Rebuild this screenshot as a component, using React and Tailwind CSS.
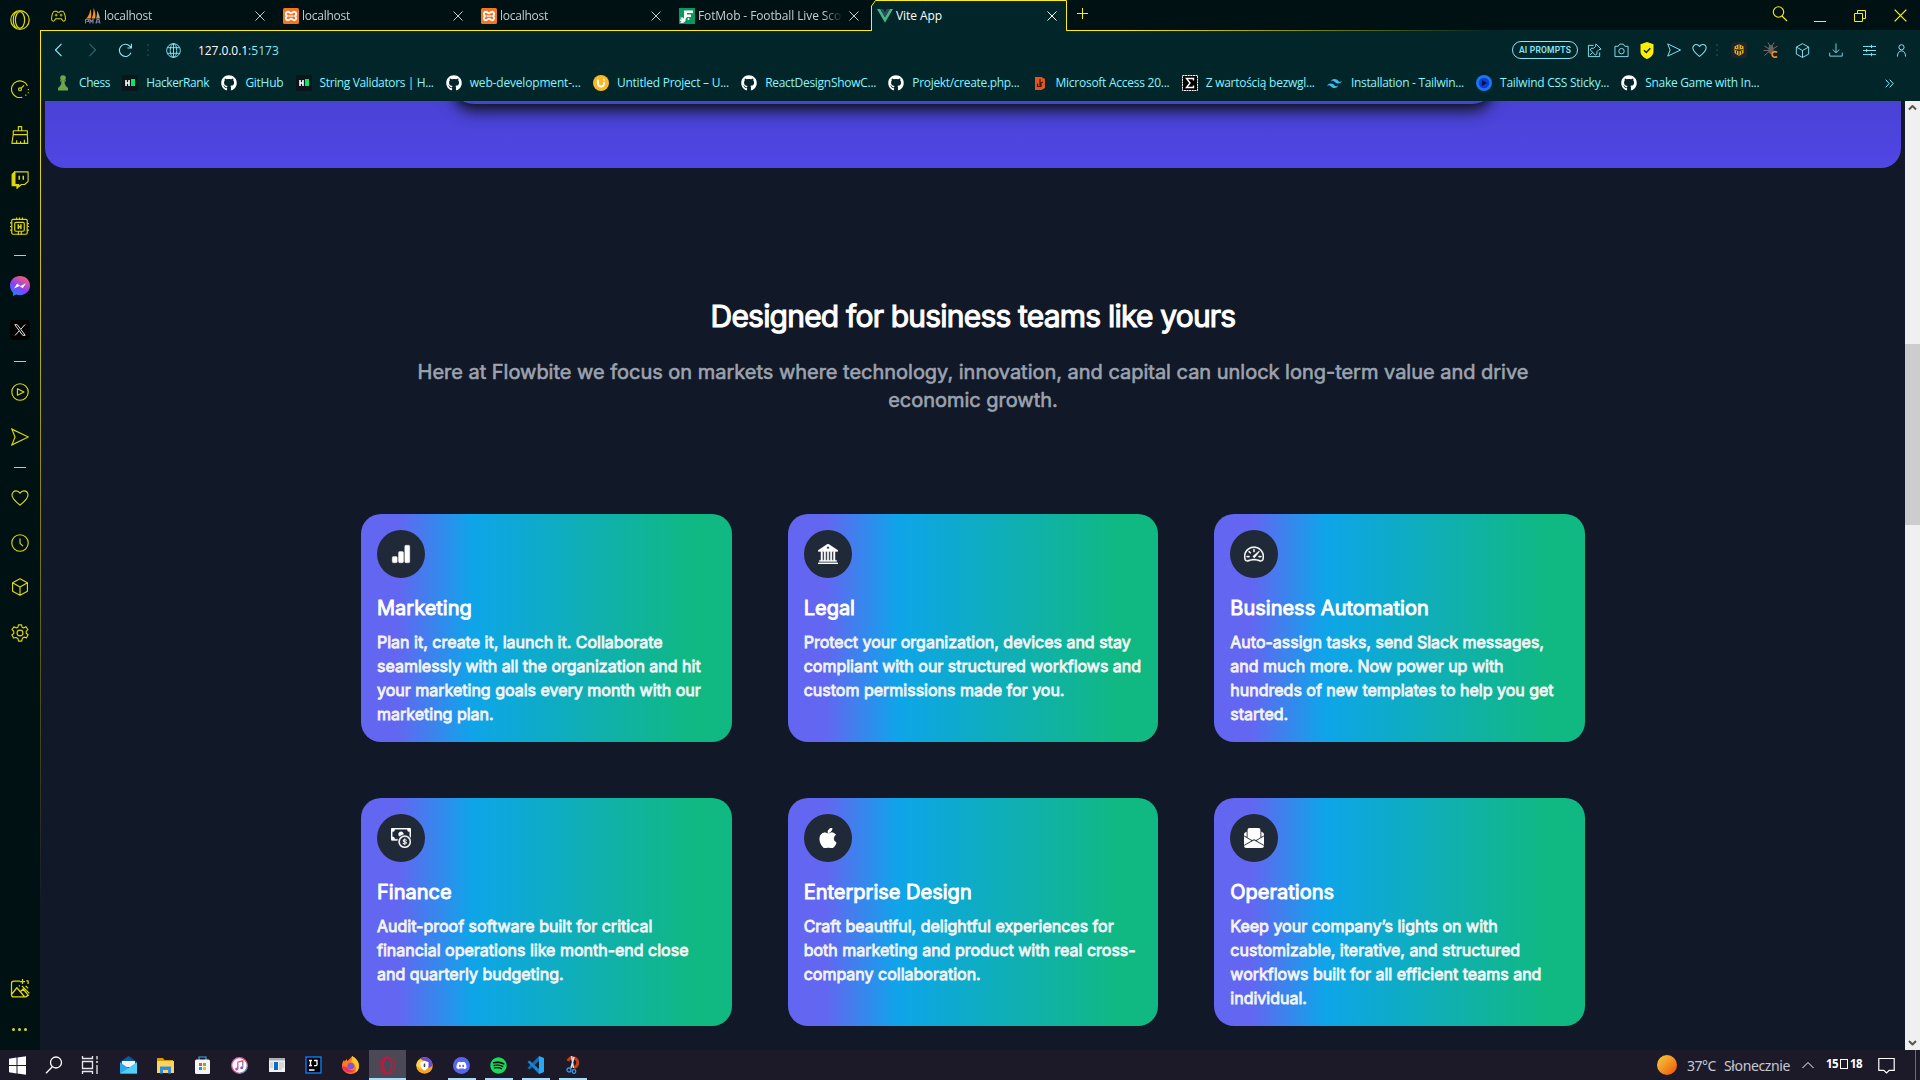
import React, { useLayoutEffect, useRef } from "react";
import {
  BsBarChartFill,
  BsBank2,
  BsSpeedometer2,
  BsCashCoin,
  BsApple,
  BsEnvelopePaperFill,
} from "react-icons/bs";
import { FaGithub, FaDiscord, FaSpotify } from "react-icons/fa";
import { SiTailwindcss } from "react-icons/si";

/* Text set to a fixed advance width by spreading the difference over its letters. */
function Fit({ w, className = "", children }) {
  const ref = useRef(null);
  useLayoutEffect(() => {
    const el = ref.current;
    el.style.letterSpacing = "0px";
    const natural = el.getBoundingClientRect().width;
    el.style.letterSpacing = (w - natural) / String(children).length + "px";
  }, [w, children]);
  return (
    <span className="block flex-none overflow-visible whitespace-nowrap" style={{ width: w }}>
      <span ref={ref} className={`inline-block ${className}`}>
        {children}
      </span>
    </span>
  );
}

function Ico({ s = 16, sw = 1, vb = 16, className = "", children }) {
  return (
    <svg
      width={s}
      height={s}
      viewBox={`0 0 ${vb} ${vb}`}
      fill="none"
      stroke="currentColor"
      strokeWidth={sw}
      strokeLinejoin="round"
      className={`flex-none ${className}`}
    >
      {children}
    </svg>
  );
}

/* ---------- shared line icons ---------- */
const Heart = (p) => (
  <Ico {...p}>
    <path d="M8 14.300C5 12 .9 8.900.9 5.400.9 3.200 2.500 1.700 4.500 1.700c1.500 0 2.700.8 3.500 2.100.8-1.300 2-2.100 3.500-2.100 2 0 3.600 1.500 3.600 3.700C15.100 8.900 11 12 8 14.300z" />
  </Ico>
);
const Send = (p) => (
  <Ico {...p}>
    <path d="M.8 1 15.500 8 .8 15 3.600 8z" strokeLinejoin="miter" />
  </Ico>
);
const Cube = (p) => (
  <Ico {...p}>
    <path d="M8 .7 14.600 4.300v7.500L8 15.400 1.400 11.800V4.300zM1.400 4.300 8 8l6.600-3.700M8 8v7.400" />
  </Ico>
);
const Cross = (p) => (
  <Ico s={10} vb={10} {...p}>
    <path d="m.5.5 9 9m0-9-9 9" />
  </Ico>
);

/* ---------- sidebar ---------- */
const SIDE = [
  [
    "h-[46px]",
    <Ico s={18}>
      <path d="M10 15.300A7.400 7.400 0 1 1 14.600 5.200" />
      <circle cx="8" cy="8.300" r="1.300" />
      <path d="m9 7.300 2.600-2.600M15.400 8v1m0 1.800v1m-1.800 1.300-.8.700" />
    </Ico>,
  ],
  [
    "h-[46px]",
    <Ico s={18}>
      <path d="M6.500 4.200V.6h3v3.600M2 4.200h12.500v3.500H2zM2 7.700.8 15.400h14.100l-.4-7.700M5 15.200v-2.500m3.500 2.500v-1.600m3.400 1.600v-3" />
    </Ico>,
  ],
  [
    "h-[44px]",
    <Ico s={18}>
      <path d="M3.300.8h11.900v8.400l-3 2.800H9.300l-2.500 2V12H3.300z" />
      <path d="M1 3 3.300.8V12h3.500v1.800L5.300 15.500V13H1z" fill="currentColor" />
      <path d="M7.300 4.200v3.600m3.600-3.600v3.600" strokeWidth="1.300" />
    </Ico>,
  ],
  [
    "h-[48px]",
    <Ico s={19}>
      <rect x="1.500" y="2" width="13" height="12.500" rx="1" />
      <rect x="4" y="4.500" width="8" height="7.500" rx="1" />
      <path d="M7 6.200v4M9.200 6.200v4M7 8.200h2.200" strokeWidth="1.300" />
      <path d="M5.500 2V.4M8 2V.4M10.500 2V.4M0 5h1.500M0 8h1.500M0 11h1.500M14.500 5.500H16M14.500 8H16M14.500 11H16M7 15v-3m2.500 3v-3" />
    </Ico>,
  ],
  ["h-[10px]", "dash"],
  [
    "h-[52px]",
    <svg width="20" height="20" viewBox="0 0 20 20">
      <defs>
        <linearGradient id="msg" x1="0.15" y1="1" x2="0.75" y2="0">
          <stop offset="0" stopColor="#0a8cff" />
          <stop offset="0.45" stopColor="#8a3ffb" />
          <stop offset="1" stopColor="#ff5f6d" />
        </linearGradient>
      </defs>
      <path
        d="M10 0C4.300 0 0 4.100 0 9.600c0 2.900 1.200 5.400 3.100 7.100V20l3-1.400c1.200.4 2.500.6 3.900.6 5.700 0 10-4.100 10-9.600S15.700 0 10 0z"
        fill="url(#msg)"
      />
      <path d="m4 12.400 3.200-5 3.200 2.500L16 7.300l-3.300 5-3.200-2.400z" fill="#fff" />
    </svg>,
  ],
  [
    "h-[36px]",
    <div className="flex size-5 items-center justify-center rounded bg-black">
      <svg width="12" height="12" viewBox="0 0 12 12" fill="none" stroke="#e5e5e5">
        <path d="M.8.7h2.500l7.900 10.600H8.700zM11 .5 6.900 5.200M5.200 6.900 1 11.500" strokeWidth="1" />
      </svg>
    </div>,
  ],
  ["h-[26px]", "dash"],
  [
    "h-[34px] pt-px",
    <Ico s={18}>
      <circle cx="8" cy="8" r="7.300" />
      <path d="M5.700 5.200v5.600L11.500 8z" />
    </Ico>,
  ],
  ["h-[58px]", <Send s={18} />],
  ["h-[2px]", "dash"],
  ["h-[58px] pt-px", <Heart s={18} />],
  [
    "h-[32px] pt-px",
    <Ico s={18}>
      <circle cx="8" cy="8" r="7.300" />
      <path d="M8 4v4.300l2.700 2.500" />
    </Ico>,
  ],
  ["h-[58px]", <Cube s={18} />],
  [
    "h-[32px] pt-px",
    <Ico s={18}>
      <circle cx="8" cy="8" r="2.600" />
      <path d="M6.600.8h2.800l.5 2.100 1.300.7 2-1.200 1.800 2.500-1.500 1.600v1.700l1.700 1.400-1.400 2.700-2.200-.6-1.500 1-.6 2.500H6.700l-.6-2.300-1.500-.9-2.300.5L.8 9.800l1.700-1.500V6.600L.9 4.900l1.700-2.400 2.200 1.100 1.300-.7z" />
    </Ico>,
  ],
];

function Sidebar() {
  return (
    <aside className="flex w-10 flex-none flex-col items-center bg-[#001113] pr-px text-[#e0d80a]">
      <div className="flex h-[66px] items-start pt-2.5">
        <svg width="20" height="20" viewBox="0 0 20 20" fill="none" stroke="currentColor" strokeWidth="1.200">
          <ellipse cx="10" cy="10" rx="9.200" ry="9.300" />
          <ellipse cx="10" cy="10" rx="4.600" ry="8.300" />
          <path d="M7 1.500C4 3 3.300 7 3.300 10s.9 7 3.700 8.500" />
        </svg>
      </div>
      {SIDE.map(([h, icon], i) => (
        <div key={i} className={`flex flex-none items-center justify-center ${h}`}>
          {icon === "dash" ? <span className="h-px w-3 flex-none bg-current" /> : icon}
        </div>
      ))}
      <div className="mt-auto flex h-[82px] flex-col items-center pt-[11px]">
        <Ico s={20}>
          <path d="M8 1.700H3A1.800 1.800 0 0 0 1.200 3.500v9A1.800 1.800 0 0 0 3 14.300h9.500A1.800 1.800 0 0 0 14 13M1.500 12 5.500 7l6 7M8.500 10l2-2 4.500 5.500M7 5.500h1M10 0v4M8 2h4M13 1.500h1.500V4M9.500 5.500l6 6m-3-6 2 2" />
        </Ico>
        <div className="mt-[29px] flex gap-[3px]">
          <i className="size-[3px] rounded-full bg-current" />
          <i className="size-[3px] rounded-full bg-current" />
          <i className="size-[3px] rounded-full bg-current" />
        </div>
      </div>
    </aside>
  );
}

/* ---------- tabs ---------- */
const Xampp = () => (
  <svg width="16" height="16" viewBox="0 0 16 16" className="flex-none">
    <rect width="16" height="16" rx="1.500" fill="#f37623" />
    <path
      d="M4.800 3.800c1.700 0 2 1.500 3.200 1.500s1.500-1.500 3.200-1.500c2.400 0 2.400 3.300.9 4.200 1.500.9 1.500 4.200-.9 4.200-1.700 0-2-1.500-3.200-1.500s-1.500 1.500-3.200 1.500c-2.400 0-2.400-3.300-.9-4.200-1.500-.9-1.500-4.200.9-4.200z"
      fill="none"
      stroke="#fff"
      strokeWidth="1.900"
    />
    <path d="M5.500 8h5" stroke="#fff" strokeWidth="1.300" />
  </svg>
);
const Pma = () => (
  <svg width="16" height="16" viewBox="0 0 16 16" className="flex-none">
    <path d="M1 10.500C3.500 8.500 5 5 5.300 1c1.200 3 1.200 6.500.5 9.500z" fill="#f0941f" />
    <path d="M6.500 10.500C8 8 8.700 4 8.500 0c1.800 3 2.300 7 1.700 10.500z" fill="#f0941f" />
    <path d="M11 10.500C12 8 12.300 5 12 2.500c1.500 2 2.400 5 3 8z" fill="#c8a070" />
    <path d="M.5 15.500v-4h3v2h-2m3.500 2v-4l1.500 2 1.500-2v4m3 0 1-4h2l1 4m-3.500-1.500h3" fill="none" stroke="#7b7fae" strokeWidth="1.200" />
  </svg>
);
const FotMob = () => (
  <svg width="16" height="16" viewBox="0 0 16 16" className="flex-none">
    <rect width="16" height="16" fill="#069a5f" />
    <path d="M5 8V2.500h9V5H8v1.500h4V9H8L6.500 11V13L4 15H1l1.500-2H1v-1.500h2l-2-2h2.500L5 10.500z" fill="#fff" />
    <circle cx="9.500" cy="11" r="1" fill="#fff" />
  </svg>
);
const Vue = () => (
  <svg width="16" height="14" viewBox="0 0 16 14" className="flex-none">
    <path d="M0 0h3.200L8 8.300 12.800 0H16L8 13.800z" fill="#41b883" />
    <path d="M3.200 0h3L8 3.200 9.800 0h3L8 8.300z" fill="#35495e" />
  </svg>
);

const TABS = [
  { icon: <Pma />, text: "localhost", w: 48 },
  { icon: <Xampp />, text: "localhost", w: 48 },
  { icon: <Xampp />, text: "localhost", w: 48 },
  { icon: <FotMob />, text: "FotMob - Football Live Sco", w: 143 },
];

function TabBar() {
  return (
    <div className="flex h-[30px] flex-none bg-[#001113] font-['Open_Sans','Noto_Sans',sans-serif] text-[12px] text-[#c6cccd]">
      <div className="flex w-[37px] items-center pl-[11px] pt-0.5">
        <Ico s={15} sw={1.100} className="text-[#e0d80a]">
          <path d="M3.800 2.500h2.400l.8.900h2l.8-.9h2.400C14 2.500 15.400 7 15.400 10.500c0 2.800-2.200 3.200-3.400 1.300l-.9-1.300H4.900L4 11.800C2.800 13.700.6 13.300.6 10.500.6 7 2 2.500 3.800 2.500z" />
          <path d="M4 6.500h3M5.500 5v3" strokeWidth=".9" />
          <circle cx="10.800" cy="6.500" r="1" strokeWidth=".9" />
        </Ico>
      </div>
      {TABS.map((t, i) => (
        <div key={i} className="flex w-[198px] flex-none items-center pl-2 pr-2.5 pt-px">
          {t.icon}
          <div className="ml-[3px] w-[145px] pt-px [mask-image:linear-gradient(to_right,#000_125px,transparent_145px)]">
            <Fit w={t.w}>{t.text}</Fit>
          </div>
          <Cross className="ml-[6px]" />
        </div>
      ))}
      <div className="relative flex w-[198px] flex-none items-center pl-2 pt-px text-white">
        <svg width="198" height="31" viewBox="0 0 198 31" className="absolute left-0 top-0 z-10">
          <path d="M0 30.500h2.500V6l4-5.500H197.500v30H2.500" fill="#02252a" />
          <path d="M0 30.500h2.500V6l4-5.500H197.500v30" fill="none" stroke="#ffee00" />
          <path d="M3 30.500h194" stroke="#02252a" />
        </svg>
        <div className="z-20 flex items-center gap-[3px]">
          <Vue />
          <div className="pt-px">
            <Fit w={46}>Vite App</Fit>
          </div>
        </div>
        <Cross className="z-20 ml-[105px]" />
      </div>
      <Ico s={11} vb={11} className="ml-[10px] mt-2 text-[#ffee00]">
        <path d="M5.500 0v11M0 5.500h11" />
      </Ico>
      <div className="ml-auto flex items-center gap-[26px] pr-[13px] pt-px text-[#ffee00]">
        <Ico s={16} sw={1.100} className="-mt-1">
          <circle cx="6.500" cy="6" r="5.200" />
          <path d="m10 10 5 5" />
        </Ico>
        <span className="mt-[11px] h-px w-3 bg-current" />
        <Ico s={14} vb={14} className="mx-[1px]">
          <path d="M1.500 4.500h8v8h-8zM4.500 4.500v-3h8v8h-3" strokeLinejoin="miter" />
        </Ico>
        <Cross s={13} />
      </div>
    </div>
  );
}

/* ---------- address bar ---------- */
const Dots = ({ className = "" }) => (
  <span className={`flex flex-col gap-[3px] ${className}`}>
    <i className="size-[2px] bg-[#0d4148]" />
    <i className="size-[2px] bg-[#0d4148]" />
    <i className="size-[2px] bg-[#0d4148]" />
  </span>
);

const Cell = ({ w, children }) => (
  <span className="flex flex-none items-center justify-center" style={{ width: w }}>
    {children}
  </span>
);

function AddressBar() {
  return (
    <div className="flex h-[38px] flex-none items-center bg-[#02252a] font-['Open_Sans','Noto_Sans',sans-serif] text-[12px] text-[#86e8f3]">
      <Cell w={36}>
        <Ico s={14} sw={1.200} vb={14}>
          <path d="M9.500.8 3.500 7l6 6.200" />
        </Ico>
      </Cell>
      <Cell w={30}>
        <Ico s={14} sw={1.100} vb={14} className="text-[#2b656d]">
          <path d="m4.500.8 6 6.200-6 6.200" />
        </Ico>
      </Cell>
      <Cell w={37}>
        <Ico s={15} sw={1.200}>
          <path d="M13.900 10.500A6.500 6.500 0 1 1 12.600 3.300L14 5M14.300.8V5.300H10" strokeLinejoin="miter" />
        </Ico>
      </Cell>
      <Dots className="ml-[3px]" />
      <span className="ml-[17px]">
        <Ico s={15}>
          <circle cx="8" cy="8" r="7.300" />
          <ellipse cx="8" cy="8" rx="3.500" ry="7.300" />
          <path d="M1.500 5h13M1.500 11h13M8 .7v14.600" />
        </Ico>
      </span>
      <div className="ml-[17px] flex pt-0.5">
        <Fit w={50} className="text-white">127.0.0.1</Fit>
        <Fit w={31}>:5173</Fit>
      </div>

      <div className="ml-auto flex items-center">
        <span className="mr-[3px] flex h-[18px] w-[66px] items-center justify-center rounded-full border border-[#86e8f3] font-['Roboto',sans-serif] text-[8.500px] font-semibold">
          <Fit w={52}>AI PROMPTS</Fit>
        </span>
        <Cell w={27}>
          <Ico s={15}>
            <path d="M7 2.500H1.500v12h12V10M9.500 1 15 6.500l-2.500.8-2 2 .2 2.200L8.900 13 3.500 7.300l1.200-1.800 2.300.2 2-2zM6 10l-3 3" />
          </Ico>
        </Cell>
        <Cell w={26}>
          <Ico s={15}>
            <path d="M1 3.500h3.500L6 1.200h4l1.500 2.300H15v11H1z" />
            <circle cx="8" cy="8.700" r="2.900" />
          </Ico>
        </Cell>
        <Cell w={26}>
          <svg width="14" height="17" viewBox="0 0 14 17">
            <path d="M7 0 13.500 2.200V9.500c0 3.500-3 6-6.500 7.500-3.500-1.500-6.500-4-6.500-7.500V2.200z" fill="#ffee00" />
            <path d="M4 8.200 6.300 10.500l4-4.300" fill="none" stroke="#02252a" strokeWidth="1.500" />
          </svg>
        </Cell>
        <Cell w={27}>
          <Send s={14} sw={1.100} />
        </Cell>
        <Cell w={25}>
          <Heart s={15} sw={1.100} />
        </Cell>
        <Cell w={9}>
          <Dots />
        </Cell>
        <Cell w={35}>
          <svg width="16" height="16" viewBox="0 0 16 16">
            <rect width="16" height="16" rx="3" fill="#20232a" />
            <path d="M8 2 12.500 4.500v6.500L8 14l-4.500-3V4.500z" fill="#e9b312" />
            <path d="M8 2V7M4 7.500l4 1.200 4-1.200M8 9v4.500M5.500 4.500V6m5-1.500V6M5.500 9v2.500m5-2.500v2.500" stroke="#20232a" />
          </svg>
        </Cell>
        <Cell w={30}>
          <svg width="16" height="16" viewBox="0 0 16 16" fill="none">
            <path d="M5 .5 7 4M11 .5 9 4M1.500 4 6 7M14.500 4 10 7M.5 8.500H6M1.500 13.500 6 9.500" stroke="#7a6a60" />
            <ellipse cx="8" cy="7.500" rx="2.600" ry="4.500" fill="#6c6058" />
            <path d="M14 10.500a2.800 2.800 0 1 0 0 3.800" stroke="#f08a1c" strokeWidth="1.800" />
          </svg>
        </Cell>
        <Cell w={33}>
          <Cube s={15} />
        </Cell>
        <Cell w={33}>
          <Ico s={14}>
            <path d="M8 .5v10.500M4.300 7.500 8 11.200l3.700-3.700M.8 11v4h14.400v-4" />
          </Ico>
        </Cell>
        <Cell w={34}>
          <Ico s={13}>
            <path d="M0 3h16M0 8h16M0 13h16M10.500 1v4M4.500 6v4M10.500 11v4" strokeWidth="1.200" />
          </Ico>
        </Cell>
        <Cell w={31}>
          <Ico s={13} sw={1.200}>
            <circle cx="8" cy="4" r="3.200" />
            <path d="M3 15.500c0-4.500 2-7 5-7s5 2.500 5 7" />
          </Ico>
        </Cell>
        <span className="w-[3px]" />
      </div>
    </div>
  );
}

/* ---------- bookmarks ---------- */
const Gh = () => <FaGithub size={16} className="text-white" />;
const Hr = () => (
  <span className="flex size-4 items-center justify-center gap-px bg-[#0c141c]">
    <svg width="10" height="8" viewBox="0 0 10 8">
      <path d="M1 1v6M4 1v6M1 4h3" stroke="#fff" strokeWidth="1.600" />
      <path d="M6 0h4v7H6z" fill="#00ea64" />
    </svg>
  </span>
);
const MARKS = [
  [
    <svg width="12" height="16" viewBox="0 0 12 16" fill="#6fa64a">
      <circle cx="6" cy="3" r="2.800" />
      <path d="M3 5.300h6v1.200H7.500c.2 3 1 4.500 3.500 6.500v2.500H1V13c2.500-2 3.300-3.500 3.500-6.500H3z" />
    </svg>,
    "Chess", 31,
  ],
  [<Hr />, "HackerRank", 63],
  [<Gh />, "GitHub", 38],
  [<Hr />, "String Validators | H...", 114],
  [<Gh />, "web-development-...", 111],
  [
    <svg width="16" height="16" viewBox="0 0 16 16">
      <circle cx="8" cy="8" r="8" fill="#fdb924" />
      <path d="M5 4.500v4a3 3 0 0 0 6 0V7" fill="none" stroke="#fff" strokeWidth="1.800" />
      <circle cx="11" cy="4.800" r="1" fill="#fff" />
    </svg>,
    "Untitled Project – U...", 112,
  ],
  [<Gh />, "ReactDesignShowC...", 111],
  [<Gh />, "Projekt/create.php...", 107],
  [
    <svg width="10" height="13" viewBox="0 0 10 13">
      <path d="M0 0h6.500L10 2v9l-3.500 2H0z" fill="#e8541e" />
      <path d="M5 2v7M2.500 6.500v3h3.500V6l2-1" fill="none" stroke="#3c1a12" strokeWidth="1.200" />
    </svg>,
    "Microsoft Access 20...", 114,
  ],
  [
    <svg width="16" height="16" viewBox="0 0 16 16">
      <rect x=".5" y=".5" width="15" height="15" fill="#000" stroke="#fff" strokeDasharray="2 .6" />
      <path d="M11.500 5.500V3.500h-7L8 8l-3.500 4.500h7v-2" fill="none" stroke="#fff" strokeWidth="1.400" />
    </svg>,
    "Z wartością bezwgl...", 109,
  ],
  [<SiTailwindcss size={15} className="text-[#38bdf8]" />, "Installation - Tailwin...", 113],
  [
    <svg width="16" height="16" viewBox="0 0 16 16">
      <circle cx="8" cy="8" r="8" fill="#1877f2" />
      <circle cx="8" cy="8" r="5.200" fill="#1239d6" />
      <path d="M6 5v6l5-3z" fill="#02153d" />
    </svg>,
    "Tailwind CSS Sticky...", 109,
  ],
  [<Gh />, "Snake Game with In...", 114],
];

function Bookmarks() {
  return (
    <div className="flex h-8 flex-none items-center gap-[12.200px] bg-[#02252a] pb-1 pl-[14px] font-['Open_Sans','Noto_Sans',sans-serif] text-[12px] text-[#86f4ff]">
      {MARKS.map(([icon, text, w], i) => (
        <div key={i} className="flex flex-none items-center gap-2">
          <span className="flex size-4 items-center justify-center">{icon}</span>
          <Fit w={w}>{text}</Fit>
        </div>
      ))}
      <Ico s={9} vb={9} className="ml-auto mr-[26px]">
        <path d="m.7.7 3.500 3.800-3.500 3.800M4.700.7l3.500 3.800-3.500 3.800" />
      </Ico>
    </div>
  );
}

/* ---------- page ---------- */
const CARDS = [
  [BsBarChartFill, "Marketing", "Plan it, create it, launch it. Collaborate seamlessly with all the organization and hit your marketing goals every month with our marketing plan."],
  [BsBank2, "Legal", "Protect your organization, devices and stay compliant with our structured workflows and custom permissions made for you."],
  [BsSpeedometer2, "Business Automation", "Auto-assign tasks, send Slack messages, and much more. Now power up with hundreds of new templates to help you get started."],
  [BsCashCoin, "Finance", "Audit-proof software built for critical financial operations like month-end close and quarterly budgeting."],
  [BsApple, "Enterprise Design", "Craft beautiful, delightful experiences for both marketing and product with real cross-company collaboration."],
  [BsEnvelopePaperFill, "Operations", "Keep your company’s lights on with customizable, iterative, and structured workflows built for all efficient teams and individual."],
];

function Page() {
  return (
    <main className="flex-1 overflow-hidden bg-[#111827] font-['Inter',sans-serif]">
      <div className="mx-1 h-[67px] overflow-hidden rounded-b-[20px] bg-[linear-gradient(to_bottom,#4a42d5,#4f46e5)]">
        <div className="mx-auto h-[3px] w-[1046px]">
          <div className="-mt-16 h-[67px] rounded-b-3xl bg-[#4a42d6] shadow-lg shadow-[#111827]" />
        </div>
      </div>

      <section className="mx-auto w-[1224px] pt-[130px]">
        <div className="mx-auto w-[1120px] text-center">
          <h2 className="text-3xl tracking-[-0.8px] text-white [-webkit-text-stroke:1.1px_currentColor]">
            Designed for business teams like yours
          </h2>
          <p className="mt-6 text-xl tracking-[-0.02px] text-[#9ca3af] [-webkit-text-stroke:0.6px_currentColor]">
            Here at Flowbite we focus on markets where technology, innovation, and capital can unlock long-term value
            and drive economic growth.
          </p>
        </div>
        <div className="mt-[100px] grid grid-cols-3 gap-14">
          {CARDS.map(([Icon, title, text]) => (
            <article
              key={title}
              className="h-[228px] rounded-[20px] bg-[linear-gradient(to_right,#6366f1_10%,#0ea5e9_30%,#10b981_90%)] p-4"
            >
              <div className="mb-4 flex size-12 items-center justify-center rounded-full bg-[#1f2937] text-white">
                <Icon size={20} className="[stroke:currentColor] [stroke-width:0.3]" />
              </div>
              <h3 className="mb-2 text-xl text-white [-webkit-text-stroke:0.9px_currentColor]">{title}</h3>
              <p className="text-base text-[#f3f4f6] [-webkit-text-stroke:0.8px_currentColor]">{text}</p>
            </article>
          ))}
        </div>
      </section>
    </main>
  );
}

function Scrollbar() {
  return (
    <div className="flex w-[15px] flex-none flex-col items-center bg-[#f0f0f0] text-[#555]">
      <Ico s={9} vb={9} sw={2} className="mt-[2px]">
        <path d="M1 6.500 4.500 3 8 6.500" />
      </Ico>
      <div className="mt-[232px] h-[181px] w-full bg-[#cdcdcd]" />
      <Ico s={9} vb={9} sw={2} className="mb-[3px] mt-auto">
        <path d="M1 3l3.500 3.500L8 3" />
      </Ico>
    </div>
  );
}

/* ---------- taskbar ---------- */
const APPS = [
  <svg width="17" height="18" viewBox="0 0 17 18">
    <path d="M0 6 8.500 0 17 6v11H0z" fill="#0c59a4" />
    <path d="M2 5h13v6H2z" fill="#f4f4f4" />
    <path d="M0 6.500 8.500 12 17 6.500V17.500H0z" fill="#28a8ea" />
    <path d="M0 17.500 17 6.500v11z" fill="#50d0fb" />
  </svg>,
  <svg width="17" height="17" viewBox="0 0 17 17">
    <path d="M0 1h6l1.500 2H16v4H0z" fill="#d99a08" />
    <path d="M0 4h17v12H0z" fill="#ffd45e" />
    <path d="M3 16.500V9.500h11v7h-3v-3.500H6v3.500z" fill="#2f8fdc" />
  </svg>,
  <svg width="15" height="18" viewBox="0 0 15 18">
    <path d="M4 4V1h7v3" fill="none" stroke="#38a9e8" strokeWidth="1.200" />
    <rect y="3.500" width="15" height="14.500" rx="1.500" fill="#f4f5f6" />
    <path d="M4 7h3v3H4z" fill="#f25022" />
    <path d="M8 7h3v3H8z" fill="#7fba00" />
    <path d="M4 11h3v3H4z" fill="#00a4ef" />
    <path d="M8 11h3v3H8z" fill="#ffb900" />
  </svg>,
  <svg width="17" height="17" viewBox="0 0 17 17">
    <defs>
      <linearGradient id="itn" x1="0" y1="0" x2="1" y2="1">
        <stop offset="0" stopColor="#fb5bc5" />
        <stop offset="0.5" stopColor="#e0455f" />
        <stop offset="1" stopColor="#3fb6f6" />
      </linearGradient>
    </defs>
    <circle cx="8.500" cy="8.500" r="7.800" fill="#fff" stroke="url(#itn)" strokeWidth="1.300" />
    <path d="M6.800 11.800V5l5-1.200v6.700" fill="none" stroke="url(#itn)" strokeWidth="1.300" />
    <circle cx="5.700" cy="11.900" r="1.500" fill="#c54bd6" />
    <circle cx="10.700" cy="10.800" r="1.500" fill="#7a61ea" />
  </svg>,
  <svg width="16" height="14" viewBox="0 0 16 14">
    <path d="M0 0h16v14H0z" fill="#f1f1f1" />
    <path d="M0 0h16v2.500H0z" fill="#aab0b5" />
    <path d="M5 4h4v8H5z" fill="#1667c0" />
    <path d="M1 5h3M1 7h3M1 9h3M10 5h5M10 7h5M10 9h5M10 11h3" stroke="#b9bcc0" />
  </svg>,
  <svg width="17" height="18" viewBox="0 0 17 18">
    <rect x="1" y="1" width="15" height="16" fill="#000" stroke="#087cfa" strokeWidth="1.400" />
    <path d="M4 4.500h3M5.500 4.500v5M4 9.500h3M9 4.500h3v4q0 1.200-1.300 1.200H9M4 14h5.500" fill="none" stroke="#fff" strokeWidth="1.300" />
  </svg>,
  <svg width="17" height="18" viewBox="0 0 17 18">
    <path d="M8 2.500C9 1.500 10 .5 10 0c3 1.500 7 5 7 10 0 5-4 8-8.500 8S0 14.500 0 9.800C0 7.500.8 5.500 2 4l.8 1.500L4.500 3l1 2z" fill="#ff7a1a" />
    <path d="M10 0c3 1.500 7 5 7 10 0 3-1.500 5-3.500 6.500C15 12 13 7 9 6c1-1.500 1.500-4 1-6z" fill="#ffc72e" />
    <path d="M0 10c1 5 5 7 9 6.500 2-.3 3-1.300 4-2.500-3 1-6.500 0-8-3z" fill="#f0305e" />
    <circle cx="8.800" cy="10" r="3.300" fill="#8a4fe0" />
  </svg>,
  <svg width="17" height="19" viewBox="0 0 17 19" fill="none" stroke="#c3183f" strokeWidth="1.100">
    <ellipse cx="8.500" cy="9.500" rx="7.700" ry="8.800" />
    <ellipse cx="8.500" cy="9.500" rx="4" ry="7.800" />
    <path d="M6 2C3.500 4 3 7 3 9.500S3.500 15 6 17" />
  </svg>,
  <svg width="17" height="17" viewBox="0 0 17 17">
    <circle cx="8.500" cy="8.500" r="8.300" fill="#f7a51c" />
    <path d="M8.500.2a8.300 8.300 0 0 1 8.300 8.300L13 11 9 3.500 3 3A8 8 0 0 1 8.500.2z" fill="#6a4bd8" />
    <path d="M.2 8.500C.5 5 3 2.500 5 2l3 3-4 7z" fill="#ffd24a" />
    <path d="M8.500 4 12.500 5v3.500c0 2.500-2 4-4 5-2-1-4-2.500-4-5V5z" fill="#fff" />
    <path d="M8.500 6.500v3.500" stroke="#4a4a5a" strokeWidth="1.600" />
  </svg>,
  <span className="flex size-[17px] items-center justify-center rounded-full bg-[#5865f2]">
    <FaDiscord size={11} className="text-white" />
  </span>,
  <span className="flex size-[17px] items-center justify-center rounded-full bg-black">
    <FaSpotify size={17} className="text-[#1ed760]" />
  </span>,
  <svg width="17" height="18" viewBox="0 0 17 18">
    <path d="M12 0 17 2v14l-5 2z" fill="#2aa8f2" />
    <path d="M12 0v5L2.500 13.500.5 12z" fill="#0a6fb8" />
    <path d="M.5 6 2.500 4.500 12 13v5z" fill="#1486d6" />
  </svg>,
  <svg width="15" height="18" viewBox="0 0 15 18">
    <path d="M3 5a5 5 0 1 1 6 6.500" fill="none" stroke="#c63e18" strokeWidth="3" />
    <path d="M6.500 0 8.500 12M9 1 6 12" stroke="#d8dde2" strokeWidth="1.500" />
    <circle cx="4" cy="14" r="2" fill="none" stroke="#2f9be8" strokeWidth="1.300" />
    <circle cx="9" cy="15.500" r="1.800" fill="none" stroke="#2f9be8" strokeWidth="1.300" />
  </svg>,
];

function Taskbar() {
  return (
    <footer className="flex h-[30px] flex-none bg-[#1c1a29] text-white">
      <div className="flex w-[110px] items-center">
        <Cell w={35}>
          <svg width="17" height="19" viewBox="0 0 17 19" fill="#fff">
            <path d="M0 2.700 7.500 1.600V9H0zM8.500 1.500 17 .2V9H8.500zM0 10h7.500v7.400L0 16.300zM8.500 10H17v8.800l-8.500-1.300z" />
          </svg>
        </Cell>
        <Cell w={37}>
          <Ico s={18} vb={18} sw={1.300}>
            <circle cx="11" cy="6.500" r="5.500" />
            <path d="M7.300 10.800 1 17.300" />
          </Ico>
        </Cell>
        <Cell w={36}>
          <Ico s={18} vb={18} sw={1.300} className="text-[#e8e8ec]">
            <path d="M1.500 5.500h10v7h-10zM1.500 0v2.500h10V0M1.500 18v-2.500h10V18M16 0v3.500M16 9v9M15 6h2" strokeLinejoin="miter" />
          </Ico>
        </Cell>
      </div>
      {APPS.map((icon, i) => (
        <div key={i} className={`flex w-[37px] flex-col items-center ${i === 7 ? "bg-[#4b4956]" : ""}`}>
          <span className="flex h-7 items-center justify-center pt-[2px]">{icon}</span>
          {i === 7 && <span className="h-[2px] w-full bg-[#a9dcfb]" />}
          {i > 8 && <span className="h-[2px] w-7 bg-[#a9dcfb]" />}
        </div>
      ))}
      <div className="ml-auto flex items-center font-['Noto_Sans',sans-serif]">
        <span className="size-5 rounded-full bg-linear-to-br from-[#f3c13a] from-10% to-[#f26a0c] to-80%" />
        <div className="ml-[10px] flex gap-2 text-[14px] text-[#c9c8d0]">
          <Fit w={29}>37°C</Fit>
          <Fit w={66}>Słonecznie</Fit>
        </div>
        <Ico s={12} vb={12} className="ml-[12px]">
          <path d="M.5 9 6 3.500 11.500 9" />
        </Ico>
        <div className="ml-[12px] flex items-center gap-px pb-0.5 text-[11.500px] font-bold">
          <Fit w={12}>15</Fit>
          <span className="mx-px h-[10px] w-[8px] border border-white" />
          <Fit w={12}>18</Fit>
        </div>
        <Ico s={17} vb={17} sw={1.200} className="ml-[16px]">
          <path d="M.8 1.500h15.400v11.800h-5L8.500 16l-2.700-2.700h-5z" strokeLinejoin="miter" />
        </Ico>
        <span className="ml-[20px] mr-1 h-full w-px bg-[#6d6b78]" />
      </div>
    </footer>
  );
}

export default function App() {
  return (
    <div className="flex h-[1080px] w-[1920px] flex-col overflow-hidden bg-[#001113]">
      <div className="flex h-[1050px] flex-none">
        <Sidebar />
        <div className="flex min-w-0 flex-1 flex-col">
          <TabBar />
          <div className="h-px flex-none bg-[linear-gradient(to_right,#ffee00_1080px,#02252a_1450px)]" />
          <div className="flex min-h-0 flex-1">
            <div className="w-px flex-none bg-[linear-gradient(to_bottom,#ffee00,#b5aa0a_320px,#111827_880px)]" />
            <div className="flex min-w-0 flex-1 flex-col">
              <AddressBar />
              <Bookmarks />
              <div className="flex min-h-0 flex-1">
                <Page />
                <Scrollbar />
              </div>
            </div>
          </div>
        </div>
      </div>
      <Taskbar />
    </div>
  );
}
